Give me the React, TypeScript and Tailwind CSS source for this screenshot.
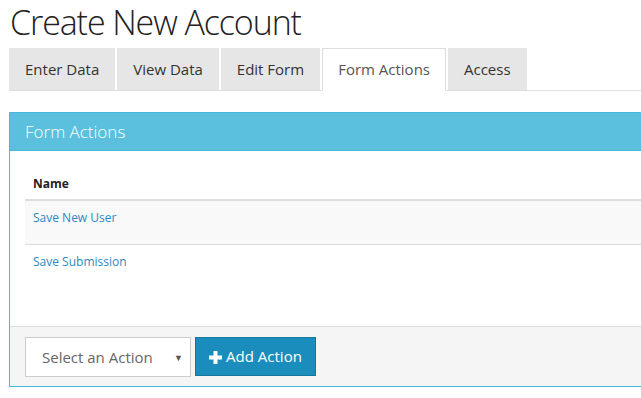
const tabs = ["Enter Data", "View Data", "Edit Form", "Form Actions", "Access"];
const actions = ["Save New User", "Save Submission"];

export default function App() {
  return (
    <div className="w-[641px] h-[398px] overflow-hidden bg-white font-['Open_Sans',sans-serif] text-[#333]">
      <div className="w-[760px] pl-[9px]">
        <h1 className="h-[48px] pl-[1px] pt-[2px] text-[34px] leading-[40px] font-light text-[#222] tracking-[-1.1px]">
          Create New Account
        </h1>

        {/* Tabs */}
        <ul className="flex h-[43px] border-b border-[#ddd]">
          {tabs.map((tab) => {
            const active = tab === "Form Actions";
            return (
              <li key={tab} className="mr-[2px] -mb-px">
                <div
                  className={`h-[43px] px-[15px] flex items-center text-[15px] ${
                    active
                      ? "bg-white border border-[#ddd] border-b-white text-[#555]"
                      : "bg-[#e6e6e6] border border-[#e6e6e6] border-b-[#ddd] text-[#333]"
                  }`}
                >
                  {tab}
                </div>
              </li>
            );
          })}
        </ul>

        {/* Panel */}
        <div className="mt-[21px] border border-[#46b8da]">
          <div className="h-[38px] bg-[#5bc0de] border-b border-[#46b8da] px-[15px] flex items-center text-[17px] text-white font-light">
            Form Actions
          </div>
          <div className="px-[15px] pt-[15px] h-[175px]">
            <table className="w-full text-[12px] border-collapse">
              <thead>
                <tr className="border-b-2 border-[#ddd]">
                  <th className="h-[34px] pt-[2px] text-left font-bold px-[8px] text-[#222]">Name</th>
                </tr>
              </thead>
              <tbody>
                {actions.map((a, i) => (
                  <tr key={a} className={`${i === 0 ? "bg-[#f9f9f9] border-b border-[#ddd]" : ""}`}>
                    <td className="h-[44px] px-[8px] align-top pt-[8px] text-[#2a8ac4]">{a}</td>
                  </tr>
                ))}
              </tbody>
            </table>
          </div>
          <div className="h-[60px] bg-[#f5f5f5] border-t border-[#ddd] px-[15px] pt-[10px] flex gap-[4px]">
            <div className="relative w-[166px] h-[40px] bg-white border border-[#ccc] flex items-center pl-[16px] text-[15px] text-[#666]">
              Select an Action
              <span className="absolute right-[7px] top-[13px] text-[9px] text-[#555]">▼</span>
            </div>
            <button className="h-[39px] w-[121px] bg-[#1a8dbc] border border-[#15769e] text-white text-[15px] flex items-center justify-center gap-[4px]">
              <svg width="13" height="13" viewBox="0 0 13 13" className="mt-[1px]">
                <rect x="4.5" y="0" width="4" height="13" fill="white" />
                <rect x="0" y="4.5" width="13" height="4" fill="white" />
              </svg>
              Add Action
            </button>
          </div>
        </div>
      </div>
    </div>
  );
}
